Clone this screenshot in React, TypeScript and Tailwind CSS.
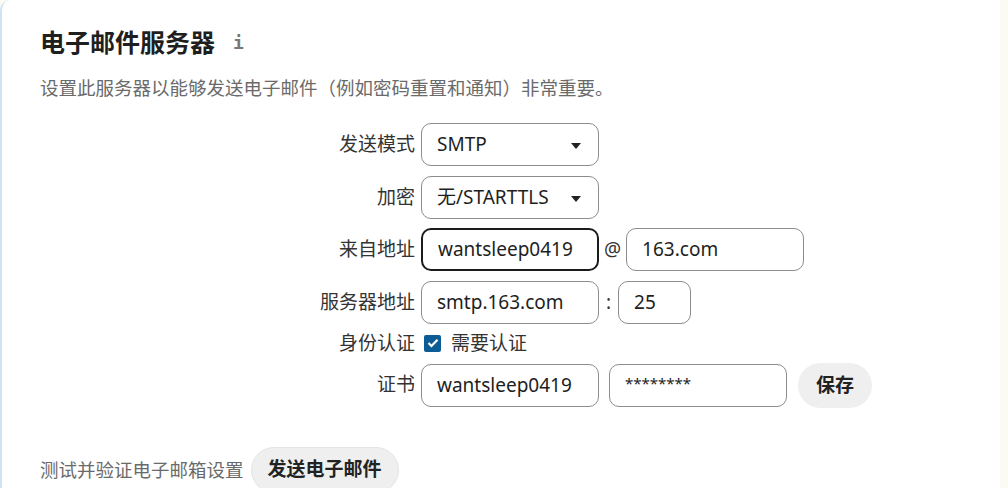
import React from "react";

const font = { fontFamily: '"Noto Sans", "Noto Sans CJK SC", sans-serif' };

function Caret() {
  return (
    <svg width="10" height="6" viewBox="0 0 10 6" className="absolute right-[17px] top-[19px]">
      <path d="M0 0 L10 0 L5 6 Z" fill="#222" />
    </svg>
  );
}

function Select({ value }: { value: string }) {
  return (
    <div className="relative flex h-[43px] w-[178px] items-center rounded-[10px] border-[1.5px] border-[#8c8c8c] bg-white pl-[15px] text-[19px] text-[#1e1e1e]">
      {value}
      <Caret />
    </div>
  );
}

function Input({
  value,
  w = 178,
  focus = false,
  pad = 15,
  small = false,
}: {
  value: string;
  w?: number;
  focus?: boolean;
  pad?: number;
  small?: boolean;
}) {
  return (
    <div
      className={
        "flex h-[43px] items-center rounded-[10px] bg-white text-[#1e1e1e] " +
        (small ? "pb-[4px] text-[15px] " : "text-[19px] ") +
        (focus ? "border-2 border-[#1b1b1b]" : "border-[1.5px] border-[#8c8c8c]")
      }
      style={{ width: w, paddingLeft: pad }}
    >
      {value}
    </div>
  );
}

function Label({ children }: { children: React.ReactNode }) {
  return <div className="flex h-[43px] items-center justify-end text-[19px] text-[#333]">{children}</div>;
}

export default function App() {
  return (
    <div className="h-[488px] w-[1008px] overflow-hidden bg-[#fbfaf3]" style={font}>
      <div className="relative h-full w-[1000px] overflow-hidden rounded-tl-[10px] border-l-[2px] border-[#cfe3f3] bg-white pl-[38px] pt-[26px]">
        <div className="flex items-center">
          <h1 className="text-[25px] font-bold leading-[32px] text-[#1f1f1f]">电子邮件服务器</h1>
          <span className="ml-[18px] mt-[1px] text-[18px] font-bold text-[#777]" style={{ fontFamily: '"DejaVu Sans Mono", monospace' }}>
            i
          </span>
        </div>
        <p className="mt-[18px] text-[18.5px] leading-[24px] text-[#6a6a6a]">
          设置此服务器以能够发送电子邮件（例如密码重置和通知）非常重要。
        </p>

        <div className="mt-[23px] grid grid-cols-[375px_auto] gap-x-[6px] gap-y-[9.5px]">
          <Label>发送模式</Label>
          <Select value="SMTP" />

          <Label>加密</Label>
          <Select value="无/STARTTLS" />

          <Label>来自地址</Label>
          <div className="flex items-center">
            <Input value="wantsleep0419" focus />
            <span className="mx-[5px] text-[19px] text-[#333]">@</span>
            <Input value="163.com" />
          </div>

          <Label>服务器地址</Label>
          <div className="flex items-center">
            <Input value="smtp.163.com" />
            <span className="mx-[7px] text-[19px] text-[#333]">:</span>
            <Input value="25" w={73} pad={15} />
          </div>

          <div className="flex h-[20px] items-center justify-end text-[19px] text-[#333]">身份认证</div>
          <div className="flex h-[20px] items-center">
            <div className="ml-[3px] flex h-[17px] w-[17px] items-center justify-center rounded-[2px] bg-[#0b5c94]">
              <svg width="12" height="10" viewBox="0 0 12 10">
                <path d="M1.5 5 L4.5 8 L10.5 1.8" stroke="white" strokeWidth="2.2" fill="none" />
              </svg>
            </div>
            <span className="ml-[10px] text-[19px] text-[#333]">需要认证</span>
          </div>

          <Label>证书</Label>
          <div className="flex items-center">
            <Input value="wantsleep0419" />
            <div className="ml-[10px]">
              <Input value="********" small />
            </div>
            <button className="ml-[11px] h-[45px] w-[74px] rounded-full bg-[#efefef] text-[19px] font-bold text-[#222]">
              保存
            </button>
          </div>
        </div>

        <div className="mt-[39px] flex items-center">
          <span className="text-[18.5px] text-[#6a6a6a]">测试并验证电子邮箱设置</span>
          <button className="ml-[7px] h-[46px] w-[148px] rounded-full border border-[#e4e4e4] bg-[#efefef] text-[19px] font-bold text-[#222]">
            发送电子邮件
          </button>
        </div>
      </div>
    </div>
  );
}
